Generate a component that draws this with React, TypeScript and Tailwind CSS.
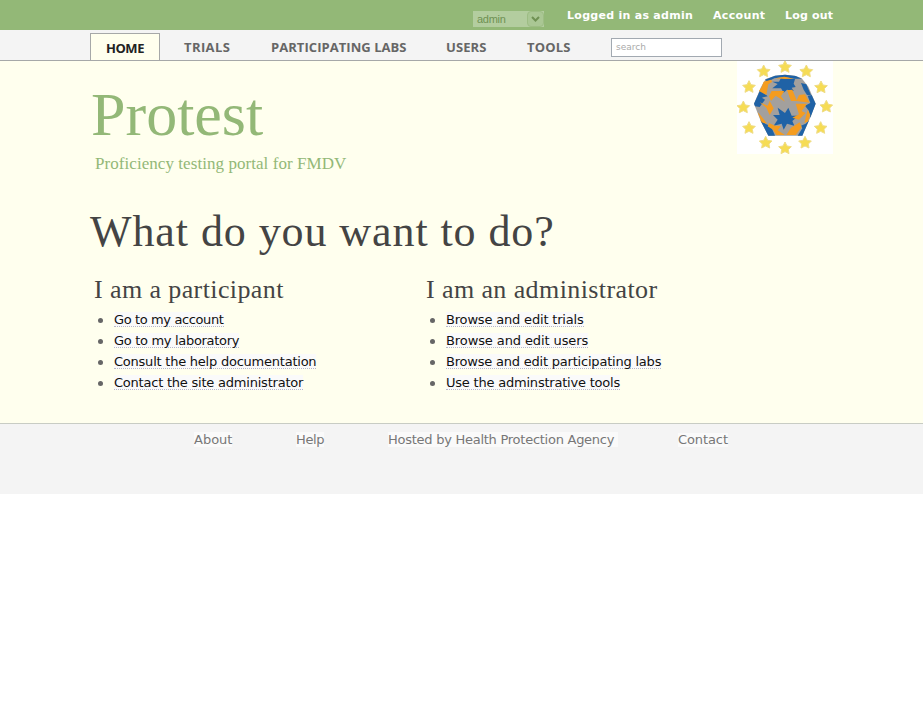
import React from "react";

const stars = [
  [180, 35], [244, 48], [288, 96], [304, 154], [287, 218], [240, 262],
  [180, 279], [122, 262], [72, 218], [55, 156], [72, 95], [116, 48],
];

function Logo() {
  return (
    <svg viewBox="36 18 288 279" className="h-[93px] w-24 bg-white">
      {stars.map(([x, y]) => (
        <path
          key={`${x}-${y}`}
          transform={`translate(${x} ${y})`}
          fill="#f6dc55"
          stroke="#efdc86"
          strokeWidth="3"
          strokeLinejoin="round"
          d="M0-18 6-6 19-4 10 5 12 17 0 11-12 17-10 5-19-4-6-6Z"
        />
      ))}
      <path fill="#a3a09d" d="M122 72 150 62 180 59 210 62 230 70 250 95 272 146 254 192 232 242H130L108 200 87 146 108 96Z" />
      <g fill="#1f62a6">
        <path d="M120 74 150 62 180 59 212 63 230 71 208 71 180 66 148 70 128 80Z" />
        <path d="M168 69 210 72 206 86 212 96 200 98 206 108 186 104 176 113 168 100 142 100 158 87 142 80 162 80Z" />
        <path d="M87 146 106 104 128 124 110 128 120 134 104 156 90 154Z" />
        <path d="M158 158 180 174 190 158 200 182H220L202 198 208 212 186 206 176 224 170 206 146 212 158 194 144 180 164 180Z" />
        <path d="M228 84 244 88 258 120 246 120 236 104Z" />
        <path d="M248 122 260 120 272 146 256 188 252 168 240 152 256 144Z" />
        <path d="M106 196 124 208 138 214 150 242H130ZM252 196 232 242H218L232 220 228 212 242 206Z" />
      </g>
      <g fill="#f49c20">
        <path d="M116 80 138 74 142 80 130 88 124 120 102 108 110 96Z" />
        <path d="M150 70 178 65 206 71 180 72Z" />
        <path d="M140 108 178 108 168 124 180 140 152 122 138 138 132 124Z" />
        <path d="M186 106 202 104 216 138 198 138ZM214 138 222 120 240 118 254 143Z" />
        <path d="M104 142 128 152 134 138 146 160 134 180 124 158Z" />
        <path d="M212 146 246 146 230 168 242 174 222 194 202 188 222 178Z" />
        <path d="M248 164 256 180 248 200 238 204Z" />
        <path d="M98 172 108 182 126 206 110 202ZM132 204 150 212 168 213 158 226 180 240H154L144 224 128 214ZM198 218 224 202 230 216 212 240H184Z" />
      </g>
    </svg>
  );
}

const nav = [
  { label: "TRIALS", place: "ml-[24px] w-[87px] tracking-[0.4px]" },
  { label: "PARTICIPATING LABS", place: "w-[175px] tracking-[0.05px]" },
  { label: "USERS", place: "w-[81px] tracking-[0.1px]" },
  { label: "TOOLS", place: "w-[84px] tracking-[0.2px]" },
];

type Link = { text: string; spacing: string };

function Column({ title, links }: { title: string; links: Link[] }) {
  return (
    <section className="w-[332px]">
      <h2 className="pl-[4px] font-['Liberation_Serif',serif] text-[26px] leading-[32px] tracking-[0.4px] text-[#444]">{title}</h2>
      <ul className="mt-[4px]">
        {links.map((l) => (
          <li key={l.text} className="flex h-[21px] items-center">
            <span className="mb-px ml-[8px] mr-[11px] size-[5px] rounded-full bg-[#666]" />
            <a className={`mb-[2px] border-b border-dotted border-[#b8b8c8] bg-[#fafafa] pt-[2px] text-[13px] leading-[12px] text-[#111] ${l.spacing}`}>{l.text}</a>
          </li>
        ))}
      </ul>
    </section>
  );
}

const participantLinks = [
  { text: "Go to my account", spacing: "tracking-[-0.38px]" },
  { text: "Go to my laboratory", spacing: "tracking-[-0.31px]" },
  { text: "Consult the help documentation", spacing: "tracking-[-0.23px]" },
  { text: "Contact the site administrator", spacing: "tracking-[-0.22px]" },
];

const administratorLinks = [
  { text: "Browse and edit trials", spacing: "tracking-[-0.18px]" },
  { text: "Browse and edit users", spacing: "tracking-[-0.1px]" },
  { text: "Browse and edit participating labs", spacing: "tracking-[-0.21px]" },
  { text: "Use the adminstrative tools", spacing: "tracking-[-0.21px]" },
];

export default function App() {
  return (
    <div className="h-[702px] bg-white font-['DejaVu_Sans',sans-serif]">
      <div className="h-[30px] bg-[#93b877]">
        <div className="mx-auto flex h-full w-[743px] text-[11px] font-bold leading-[32px] text-white">
          <div className="ml-[383px] mt-[11px] flex h-4 w-[71px] shrink-0 bg-[#b3cd9f] font-['Liberation_Sans',sans-serif] text-[11px] font-normal leading-4 tracking-[-0.3px] text-[#6f9153]">
            <span className="w-[54px] pl-[4px]">admin</span>
            <span className="flex h-4 w-[17px] items-center justify-center rounded-sm border border-[#9dbd84] bg-[#aac794]">
              <svg viewBox="0 0 9 6" className="h-[6px] w-[9px]"><path d="M1 1 4.5 4.5 8 1" fill="none" stroke="#6f9153" strokeWidth="2" /></svg>
            </span>
          </div>
          <span className="ml-[23px] w-[146px] shrink-0 whitespace-nowrap tracking-[0.28px]">Logged in as admin</span>
          <span className="w-[72px] shrink-0 tracking-[0.35px]">Account</span>
          <span className="shrink-0 tracking-[0.2px]">Log out</span>
        </div>
      </div>
      <div className="h-[31px] border-b border-[#a6a8a8] bg-[#f4f4f4]">
        <nav className="mx-auto flex w-[743px] font-['Open_Sans',sans-serif] text-[13px] font-bold leading-[34px] text-[#666]">
          <a className="mt-[3px] h-[27px] w-[70px] border border-b-0 border-[#a6a8a8] bg-[#ffffee] text-center leading-[28px] tracking-[-0.4px] text-[#222]">HOME</a>
          {nav.map((n) => <a key={n.label} className={`shrink-0 whitespace-nowrap ${n.place}`}>{n.label}</a>)}
          <div className="mt-[8px] h-[19px] w-[111px] border border-[#a2a9b1] bg-white pl-[4px] font-['DejaVu_Sans',sans-serif] text-[9px] font-normal leading-[17px] text-[#aaa]">search</div>
        </nav>
      </div>
      <main className="h-[363px] border-b border-[#c8ccc4] bg-[#ffffee]">
        <div className="mx-auto w-[743px]">
          <header className="flex h-[140px] items-start justify-between font-['Liberation_Serif',serif] text-[#93b877]">
            <div>
              <div className="mt-[18px] pl-[1px] text-[62px] leading-[70px]">Protest</div>
              <div className="mt-[5px] pl-[5px] text-[17px] leading-[20px] tracking-[0.06px]">Proficiency testing portal for FMDV</div>
            </div>
            <Logo />
          </header>
          <h1 className="pt-[1px] font-['Liberation_Serif',serif] text-[44px] leading-[60px] tracking-[0.92px] text-[#444]">What do you want to do?</h1>
          <div className="mt-[12px] flex">
            <Column title="I am a participant" links={participantLinks} />
            <Column title="I am an administrator" links={administratorLinks} />
          </div>
        </div>
      </main>
      <footer className="h-[70px] bg-[#f4f4f4] pt-[9px]">
        <div className="flex pl-[194px] text-[13px] leading-[14px] text-[#777]">
          <span className="w-[102px]"><a className="bg-[#fafafa]">About</a></span>
          <span className="w-[92px]"><a className="bg-[#fafafa] tracking-[-0.4px]">Help</a></span>
          <span className="w-[290px]"><a className="bg-[#fafafa] pr-1 tracking-[-0.26px]">Hosted by Health Protection Agency</a></span>
          <a className="bg-[#fafafa] tracking-[-0.1px]">Contact</a>
        </div>
      </footer>
    </div>
  );
}
